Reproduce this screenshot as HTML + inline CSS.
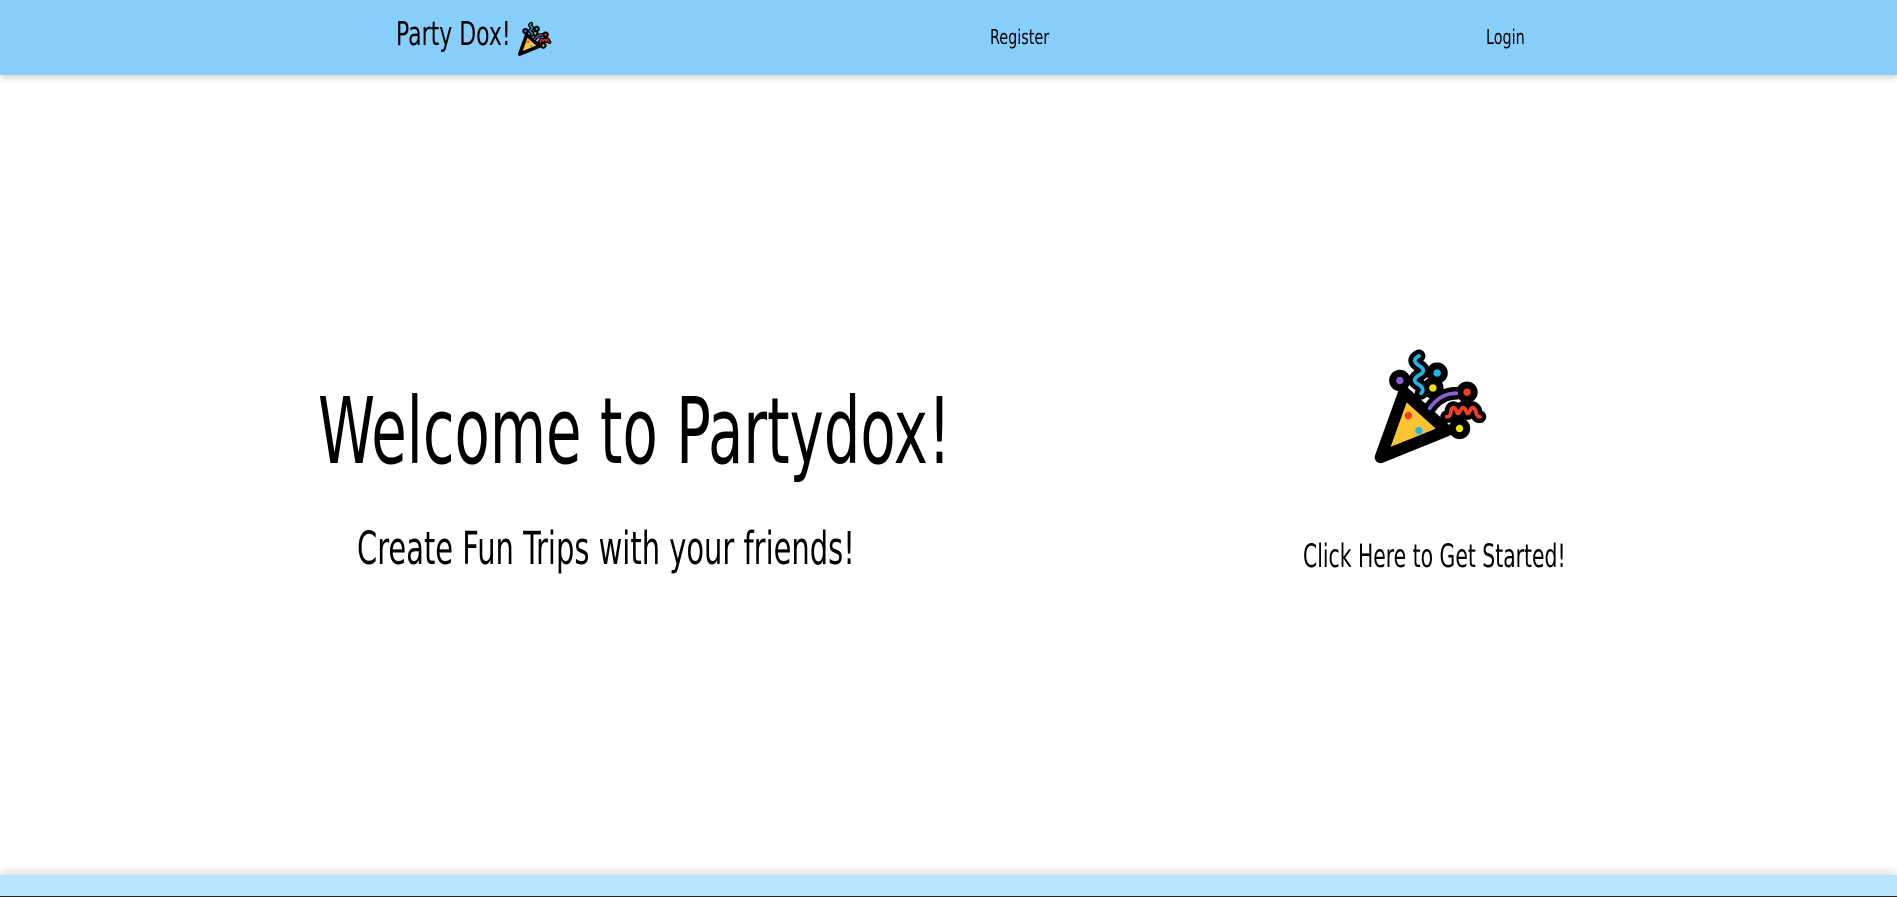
<!DOCTYPE html>
<html><head><meta charset="utf-8">
<style>
html,body{margin:0;padding:0;width:1897px;height:897px;overflow:hidden;background:#fff;font-family:"Liberation Sans Narrow","DejaVu Sans Condensed","Liberation Sans",sans-serif;color:#000}
.hdr{position:absolute;left:0;top:0;width:1897px;height:75px;background:#87cefa;box-shadow:0 3px 6px rgba(0,0,0,.18)}
.t{position:absolute;white-space:nowrap;transform-origin:left top;transform:scaleX(0.72)}
.ftr{position:absolute;left:0;top:875px;width:1897px;height:21px;background:#b9e6fe;box-shadow:0 -4px 8px rgba(0,0,0,.12)}
.bar{position:absolute;left:0;top:896px;width:1897px;height:1px;background:#222}
</style></head><body>
<svg width="0" height="0" style="position:absolute">
<defs>
<symbol id="pop" viewBox="0 0 150 140">
<g fill="none" stroke="#000" stroke-width="12" stroke-linecap="round" stroke-linejoin="round">
<path d="M60 24 q-8 4 0 9 q8 5 0 9 q-8 5 0 9 q6 4 2 8"/>
<path d="M70 73 q10 -14 25 -14"/>
<path d="M86 81 q4 0 4 -6 q2 -5 5 0 q1 6 4 0 q2 -5 5 0 q1 6 4 0 q2 -5 5 0 q1 6 4 6"/>
<circle cx="42" cy="47" r="4"/>
<circle cx="77" cy="40" r="4"/>
<circle cx="73" cy="54" r="4"/>
<circle cx="105" cy="58" r="4"/>
<circle cx="98" cy="92" r="4"/>
</g>
<path d="M24 119 L46 58 L86 94 Z" fill="#fcc434" stroke="#000" stroke-width="11" stroke-linejoin="round"/>
<path d="M60 24 q-8 4 0 9 q8 5 0 9 q-8 5 0 9 q6 4 2 8" fill="none" stroke="#1fb7eb" stroke-width="3.5" stroke-linecap="round"/>
<path d="M70 73 q10 -14 25 -14" fill="none" stroke="#8a5fd6" stroke-width="3.5" stroke-linecap="round"/>
<path d="M86 81 q4 0 4 -6 q2 -5 5 0 q1 6 4 0 q2 -5 5 0 q1 6 4 0 q2 -5 5 0 q1 6 4 6" fill="none" stroke="#f0401f" stroke-width="3.5" stroke-linecap="round"/>
<circle cx="42" cy="47" r="3.5" fill="#8a5fd6"/>
<circle cx="77" cy="40" r="3.5" fill="#1fb7eb"/>
<circle cx="73" cy="54" r="3.5" fill="#f5e012"/>
<circle cx="105" cy="58" r="3.5" fill="#f0401f"/>
<circle cx="98" cy="92" r="3.5" fill="#f5e012"/>
<circle cx="50" cy="80" r="3.5" fill="#f0401f"/>
<circle cx="60" cy="94" r="3.5" fill="#1fb7eb"/>
</symbol>
</defs></svg>
<div class="hdr">
<div class="t" style="left:396px;top:14px;font-size:33px;transform:scaleX(0.74)">Party Dox!</div>
<svg style="position:absolute;left:512px;top:16px" width="48" height="45"><use href="#pop"/></svg>
<div class="t" style="left:990px;top:25px;font-size:20px;transform:scaleX(0.8)">Register</div>
<div class="t" style="left:1486px;top:25px;font-size:20px;transform:scaleX(0.8)">Login</div>
</div>
<div class="t" style="left:318px;top:378px;font-size:92px;transform:scaleX(0.697)">Welcome to Partydox!</div>
<div class="t" style="left:357px;top:522px;font-size:45px;transform:scaleX(0.715)">Create Fun Trips with your friends!</div>
<svg style="position:absolute;left:1355px;top:330px" width="160" height="150" viewBox="0 0 150 140"><use href="#pop"/></svg>
<div class="t" style="left:1303px;top:537px;font-size:32px;transform:scaleX(0.707)">Click Here to Get Started!</div>
<div class="ftr"></div>
<div class="bar"></div>
</body></html>
